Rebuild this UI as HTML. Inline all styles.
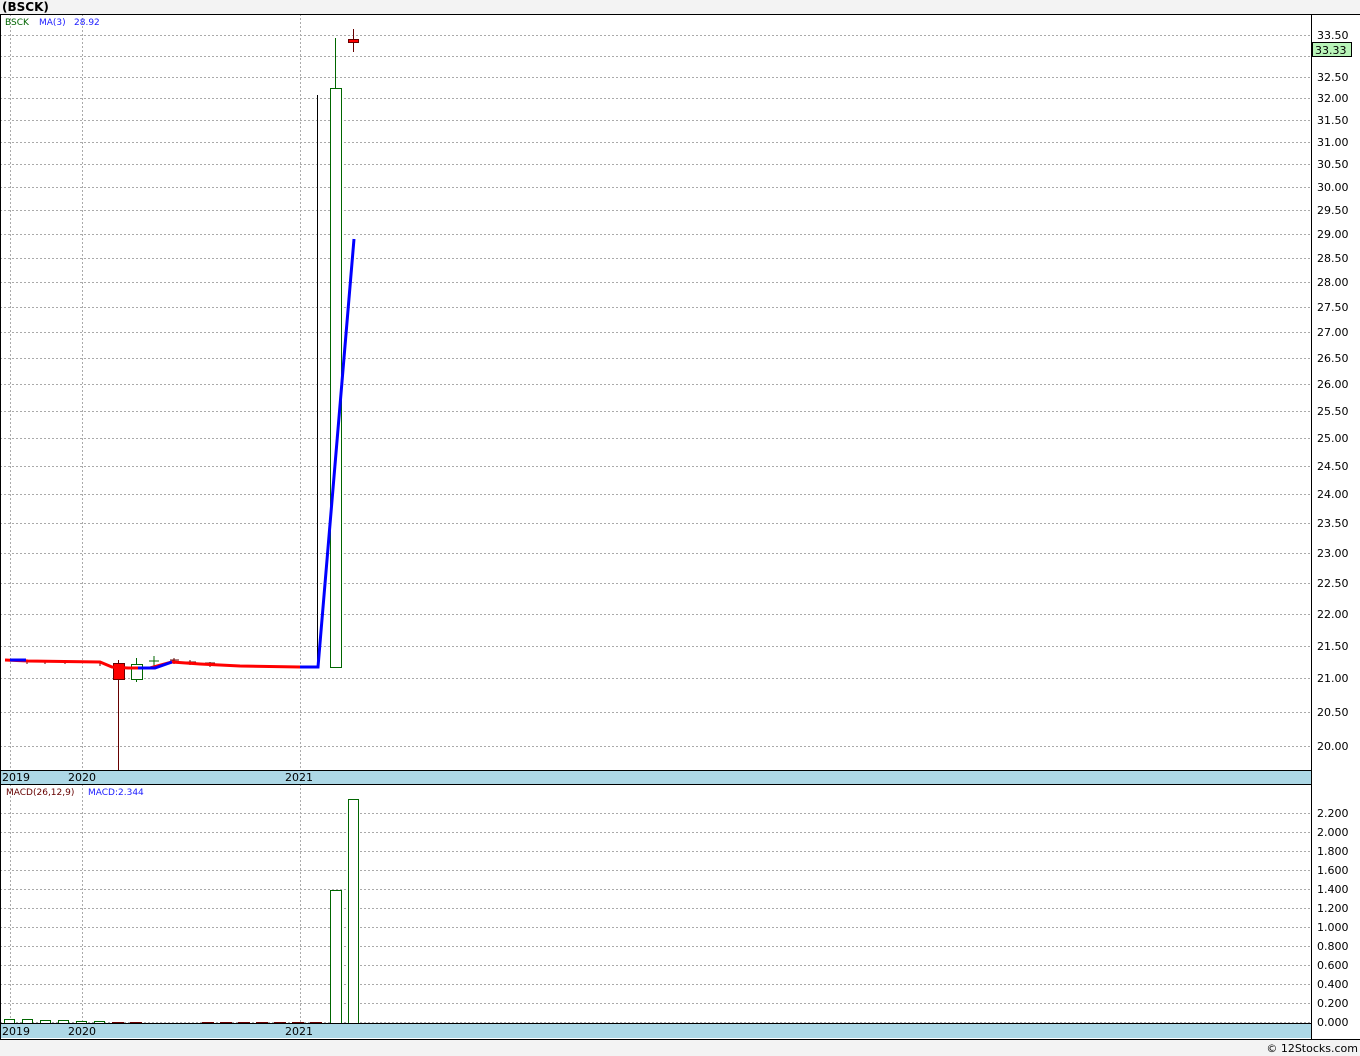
<!DOCTYPE html>
<html><head><meta charset="utf-8"><style>
html,body{margin:0;padding:0;background:#f3f3f3;width:1360px;height:1056px;overflow:hidden}
svg{display:block}
text{font-family:"DejaVu Sans","Liberation Sans",sans-serif}
</style></head><body>
<svg width="1360" height="1056" viewBox="0 0 1360 1056" xmlns="http://www.w3.org/2000/svg">
<rect x="0" y="0" width="1360" height="1056" fill="#f3f3f3"/>
<text x="2" y="11" font-size="12" font-weight="bold" fill="#000">(BSCK)</text>
<rect x="0" y="14" width="1360" height="1026" fill="#fff"/>
<g stroke="#aaa" stroke-dasharray="2,2" stroke-width="1">
<line x1="0" x2="1311" y1="35.5" y2="35.5"/><line x1="0" x2="1311" y1="56.5" y2="56.5"/><line x1="0" x2="1311" y1="77.5" y2="77.5"/><line x1="0" x2="1311" y1="98.5" y2="98.5"/><line x1="0" x2="1311" y1="120.5" y2="120.5"/><line x1="0" x2="1311" y1="142.5" y2="142.5"/><line x1="0" x2="1311" y1="164.5" y2="164.5"/><line x1="0" x2="1311" y1="187.5" y2="187.5"/><line x1="0" x2="1311" y1="210.5" y2="210.5"/><line x1="0" x2="1311" y1="234.5" y2="234.5"/><line x1="0" x2="1311" y1="258.5" y2="258.5"/><line x1="0" x2="1311" y1="282.5" y2="282.5"/><line x1="0" x2="1311" y1="307.5" y2="307.5"/><line x1="0" x2="1311" y1="332.5" y2="332.5"/><line x1="0" x2="1311" y1="358.5" y2="358.5"/><line x1="0" x2="1311" y1="384.5" y2="384.5"/><line x1="0" x2="1311" y1="411.5" y2="411.5"/><line x1="0" x2="1311" y1="438.5" y2="438.5"/><line x1="0" x2="1311" y1="466.5" y2="466.5"/><line x1="0" x2="1311" y1="494.5" y2="494.5"/><line x1="0" x2="1311" y1="523.5" y2="523.5"/><line x1="0" x2="1311" y1="553.5" y2="553.5"/><line x1="0" x2="1311" y1="583.5" y2="583.5"/><line x1="0" x2="1311" y1="614.5" y2="614.5"/><line x1="0" x2="1311" y1="646.5" y2="646.5"/><line x1="0" x2="1311" y1="678.5" y2="678.5"/><line x1="0" x2="1311" y1="712.5" y2="712.5"/><line x1="0" x2="1311" y1="746.5" y2="746.5"/>
<line x1="10.5" x2="10.5" y1="14" y2="770"/><line x1="82.5" x2="82.5" y1="14" y2="770"/><line x1="300.5" x2="300.5" y1="14" y2="770"/>
<line x1="0" x2="1311" y1="813.5" y2="813.5"/><line x1="0" x2="1311" y1="832.5" y2="832.5"/><line x1="0" x2="1311" y1="851.5" y2="851.5"/><line x1="0" x2="1311" y1="870.5" y2="870.5"/><line x1="0" x2="1311" y1="889.5" y2="889.5"/><line x1="0" x2="1311" y1="908.5" y2="908.5"/><line x1="0" x2="1311" y1="927.5" y2="927.5"/><line x1="0" x2="1311" y1="946.5" y2="946.5"/><line x1="0" x2="1311" y1="965.5" y2="965.5"/><line x1="0" x2="1311" y1="984.5" y2="984.5"/><line x1="0" x2="1311" y1="1003.5" y2="1003.5"/><line x1="0" x2="1311" y1="1022.5" y2="1022.5"/>
<line x1="10.5" x2="10.5" y1="784" y2="1023"/><line x1="82.5" x2="82.5" y1="784" y2="1023"/><line x1="300.5" x2="300.5" y1="784" y2="1023"/>
</g>
<g font-size="11" fill="#000">
<text x="1317" y="39">33.50</text><text x="1317" y="81">32.50</text><text x="1317" y="102">32.00</text><text x="1317" y="124">31.50</text><text x="1317" y="146">31.00</text><text x="1317" y="168">30.50</text><text x="1317" y="191">30.00</text><text x="1317" y="214">29.50</text><text x="1317" y="238">29.00</text><text x="1317" y="262">28.50</text><text x="1317" y="286">28.00</text><text x="1317" y="311">27.50</text><text x="1317" y="336">27.00</text><text x="1317" y="362">26.50</text><text x="1317" y="388">26.00</text><text x="1317" y="415">25.50</text><text x="1317" y="442">25.00</text><text x="1317" y="470">24.50</text><text x="1317" y="498">24.00</text><text x="1317" y="527">23.50</text><text x="1317" y="557">23.00</text><text x="1317" y="587">22.50</text><text x="1317" y="618">22.00</text><text x="1317" y="650">21.50</text><text x="1317" y="682">21.00</text><text x="1317" y="716">20.50</text><text x="1317" y="750">20.00</text>
<text x="1317" y="817">2.200</text><text x="1317" y="836">2.000</text><text x="1317" y="855">1.800</text><text x="1317" y="874">1.600</text><text x="1317" y="893">1.400</text><text x="1317" y="912">1.200</text><text x="1317" y="931">1.000</text><text x="1317" y="950">0.800</text><text x="1317" y="969">0.600</text><text x="1317" y="988">0.400</text><text x="1317" y="1007">0.200</text><text x="1317" y="1026">0.000</text>
</g>
<rect x="1312.5" y="42.5" width="39" height="14" fill="#b8f4b8" stroke="#000"/>
<text x="1315" y="54" font-size="11">33.33</text>
<text x="5" y="25" font-size="9" fill="#006400">BSCK</text>
<text x="39" y="25" font-size="9" fill="#2020ff">MA(3)</text>
<text x="74" y="25" font-size="9" fill="#2020ff">28.92</text>
<text x="6" y="795" font-size="9" fill="#600">MACD(26,12,9)</text>
<text x="88" y="795" font-size="9" fill="#2020ff">MACD:2.344</text>
<line x1="118.5" x2="118.5" y1="660" y2="770" stroke="#600"/>
<rect x="113.5" y="663.5" width="11" height="16" fill="#f00" stroke="#600"/>
<line x1="136.5" x2="136.5" y1="658" y2="682" stroke="#060"/>
<rect x="131.5" y="664.5" width="11" height="15" fill="#fff" stroke="#060"/>
<path d="M149 661h10M154 656v10" stroke="#060"/>
<g stroke="#600"><path d="M5 659.5h10M27 660v4M45 660v4M65 660v4M100 661v5M170 660h9M174 658v6M185 662h11M190 660v5M205 663h10M210 662v5"/></g>
<line x1="317.5" x2="317.5" y1="95" y2="667" stroke="#000"/>
<line x1="335.5" x2="335.5" y1="38" y2="89" stroke="#060"/>
<rect x="330.5" y="88.5" width="11" height="579" fill="#fff" stroke="#060" stroke-width="1"/>
<line x1="353.5" x2="353.5" y1="29" y2="52" stroke="#600"/>
<rect x="348.5" y="39.5" width="10" height="3" fill="#f00" stroke="#600"/>
<polyline points="5,660 28,661 100,662 112,667 128,668 150,668 172,662" fill="none" stroke="#f00" stroke-width="3"/>
<polyline points="172,662 200,664 240,666 300,667 318,667" fill="none" stroke="#f00" stroke-width="3"/>
<polyline points="10,660 26,660" fill="none" stroke="#00f" stroke-width="3"/>
<polyline points="138,668 155,668 172,662" fill="none" stroke="#00f" stroke-width="3"/>
<polyline points="300,667 318,667 354,239" fill="none" stroke="#00f" stroke-width="3"/>
<g fill="#fff" stroke="#060"><rect x="4.5" y="1019.5" width="10" height="4"/><rect x="22.5" y="1019.5" width="10" height="4"/><rect x="40.5" y="1020.5" width="10" height="3"/><rect x="58.5" y="1020.5" width="10" height="3"/><rect x="76.5" y="1021.5" width="10" height="2"/><rect x="94.5" y="1021.5" width="10" height="2"/>
<rect x="330.5" y="890.5" width="11" height="133"/><rect x="348.5" y="799.5" width="10" height="224"/></g>
<g fill="#f00" stroke="#600"><rect x="112.5" y="1022.5" width="11" height="1"/><rect x="130.5" y="1022.5" width="11" height="1"/><rect x="202.5" y="1022.5" width="11" height="1"/><rect x="220.5" y="1022.5" width="11" height="1"/><rect x="238.5" y="1022.5" width="11" height="1"/><rect x="256.5" y="1022.5" width="11" height="1"/><rect x="274.5" y="1022.5" width="11" height="1"/><rect x="292.5" y="1022.5" width="11" height="1"/><rect x="310.5" y="1022.5" width="11" height="1"/></g>
<rect x="0" y="770" width="1311" height="14" fill="#add8e6"/>
<rect x="0" y="1024" width="1311" height="14" fill="#add8e6"/>
<g font-size="11" fill="#000"><text x="2" y="781">2019</text><text x="68" y="781">2020</text><text x="285" y="781">2021</text>
<text x="2" y="1035">2019</text><text x="68" y="1035">2020</text><text x="285" y="1035">2021</text></g>
<g stroke="#000" fill="none" stroke-width="1">
<line x1="0" x2="1360" y1="14.5" y2="14.5"/>
<line x1="0.5" x2="0.5" y1="14" y2="1040"/>
<line x1="1311.5" x2="1311.5" y1="14" y2="1040"/>
<line x1="0" x2="1311" y1="770.5" y2="770.5"/>
<line x1="0" x2="1311" y1="784.5" y2="784.5"/>
<line x1="0" x2="1311" y1="1023.5" y2="1023.5"/>
<line x1="0" x2="1360" y1="1039.5" y2="1039.5"/>
</g>
<rect x="0" y="1040" width="1360" height="16" fill="#f3f3f3"/>
<text x="1358" y="1052" font-size="11" text-anchor="end" fill="#000">© 12Stocks.com</text>
</svg>
</body></html>
